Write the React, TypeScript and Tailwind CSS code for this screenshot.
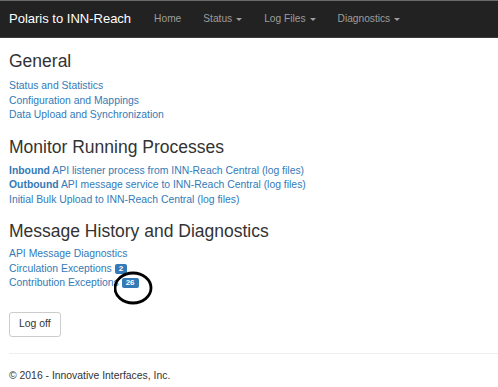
export default function App() {
  return (
    <div className="min-h-[387px] w-[498px] bg-white font-['Liberation_Sans',Arial,sans-serif] text-[#333]">
      {/* navbar */}
      <div className="flex h-[38px] items-center border-t border-b border-t-[#6a6a6a] border-b-[#3a3a3a] bg-[#222] pl-[9px]">
        <span className="text-[13px] text-white">Polaris to INN-Reach</span>
        <div className="ml-[12px] flex items-center text-[10.2px] text-[#9d9d9d]">
          <span className="px-[11px]">Home</span>
          <NavDrop label="Status" />
          <NavDrop label="Log Files" />
          <NavDrop label="Diagnostics" />
        </div>
      </div>

      <div className="px-[9px]">
        <h3 className="mt-[14px] text-[17.5px] leading-[19px]">General</h3>
        <ul className="mt-[8px] text-[10.4px] leading-[14.5px] text-[#337ab7]">
          <li>Status and Statistics</li>
          <li>Configuration and Mappings</li>
          <li>Data Upload and Synchronization</li>
        </ul>

        <h3 className="mt-[15px] text-[17.5px] leading-[19px]">Monitor Running Processes</h3>
        <ul className="mt-[7px] text-[10.4px] leading-[14.5px] text-[#337ab7]">
          <li>
            <b>Inbound</b> API listener process from INN-Reach Central (log files)
          </li>
          <li>
            <b>Outbound</b> API message service to INN-Reach Central (log files)
          </li>
          <li>Initial Bulk Upload to INN-Reach Central (log files)</li>
        </ul>

        <h3 className="mt-[15px] text-[17.5px] leading-[19px]">Message History and Diagnostics</h3>
        <ul className="mt-[6px] text-[10.4px] leading-[14.5px] text-[#337ab7]">
          <li>API Message Diagnostics</li>
          <li>
            Circulation Exceptions <Badge n="2" />
          </li>
          <li>
            Contribution Exceptions{" "}
            <span className="relative">
              <Badge n="26" />
              {/* hand-drawn annotation ring */}
              <svg
                className="absolute left-[-8px] top-[-6px]"
                width="40"
                height="34"
                viewBox="0 0 40 34"
              >
                <ellipse cx="19" cy="17" rx="18" ry="15" fill="none" stroke="#000" strokeWidth="2.8" />
              </svg>
            </span>
          </li>
        </ul>

        <button className="mt-[21px] h-[25px] rounded-[3px] border border-[#ccc] bg-white px-[9px] text-[10.4px] text-[#333]">
          Log off
        </button>
      </div>

      <div className="ml-[9px] mt-[16px] border-t border-[#eee]" />
      <p className="px-[9px] pt-[15px] text-[10.4px] leading-[14px]">© 2016 - Innovative Interfaces, Inc.</p>
    </div>
  );
}

function NavDrop({ label }: { label: string }) {
  return (
    <span className="flex items-center px-[11px]">
      {label}
      <span className="ml-[4px] mt-[1px] h-0 w-0 border-x-[3px] border-t-[3px] border-x-transparent border-t-[#9d9d9d]" />
    </span>
  );
}

function Badge({ n }: { n: string }) {
  return (
    <span className="inline-block rounded-[2px] bg-[#337ab7] px-[4px] text-[8px] font-bold leading-[10px] text-white align-[1px]">
      {n}
    </span>
  );
}
